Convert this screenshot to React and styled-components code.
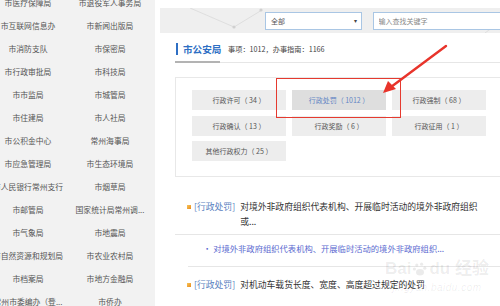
import React from 'react';
import styled, { createGlobalStyle } from 'styled-components';

const departments = [
    ['市医疗保障局', '市退役军人事务局'],
    ['市互联网信息办', '市新闻出版局'],
    ['市消防支队', '市保密局'],
    ['市行政审批局', '市科技局'],
    ['市市监局', '市城管局'],
    ['市住建局', '市人社局'],
    ['市公积金中心', '常州海事局'],
    ['市应急管理局', '市生态环境局'],
    ['市人民银行常州支行', '市烟草局'],
    ['市邮管局', '国家统计局常州调...'],
    ['市气象局', '市地震局'],
    ['市自然资源和规划局', '市农业农村局'],
    ['市档案局', '市地方金融局'],
    ['常州市委编办（登...', '市侨办'],
];

const powers = [
    { name: '行政许可', count: 34 },
    { name: '行政处罚', count: 1012, active: true },
    { name: '行政强制', count: 68 },
    { name: '行政确认', count: 13 },
    { name: '行政奖励', count: 6 },
    { name: '行政征用', count: 1 },
    { name: '其他行政权力', count: 25 },
];

const App = () => {
    return (
        <>
            <GlobalStyle />
            <Page>
                <Sidebar>
                    <DeptGrid>
                        {departments.flat().map((dept, index) => (
                            <Dept key={index}>{dept}</Dept>
                        ))}
                    </DeptGrid>
                </Sidebar>

                <Main>
                    <SearchBar>
                        <Network width="340" height="25">
                            <polyline points="30,0 74,19 102,2" fill="none" stroke="#d9d9d9" strokeWidth="0.8" />
                            <line x1="325" y1="25" x2="345" y2="10" stroke="#d9d9d9" strokeWidth="0.8" />
                            <circle cx="74" cy="19" r="1.6" fill="#d0d0d0" />
                            <circle cx="101" cy="2" r="1.6" fill="#d0d0d0" />
                        </Network>
                        <Select>
                            <span>全部</span>
                            <Caret>▾</Caret>
                        </Select>
                        <Search placeholder="输入查找关键字" />
                    </SearchBar>

                    <TitleRow>
                        <TitleTab>
                            <Title>市公安局</Title>
                        </TitleTab>
                        <Stats>事项：1012，办事指南：1166</Stats>
                    </TitleRow>

                    <Card>
                        {powers.map((power) => (
                            <PowerButton key={power.name} $active={power.active}>
                                {power.name}（ {power.count} ）
                            </PowerButton>
                        ))}
                    </Card>

                    <Item>
                        <Bullet />
                        <Tag>[行政处罚]</Tag>
                        <ItemText>对境外非政府组织代表机构、开展临时活动的境外非政府组织或...</ItemText>
                    </Item>
                    <SubItem>· 对境外非政府组织代表机构、开展临时活动的境外非政府组织...</SubItem>
                    <Item $last>
                        <Bullet />
                        <Tag>[行政处罚]</Tag>
                        <ItemText>对机动车载货长度、宽度、高度超过规定的处罚</ItemText>
                    </Item>
                </Main>

                <Highlight />
                <Arrow width="500" height="306">
                    <line x1="446" y1="46" x2="391" y2="87" stroke="#e8342b" strokeWidth="2.4" strokeLinecap="round" />
                    <polygon points="383,93 388,81 396,89" fill="#e8342b" />
                </Arrow>

                <Watermark>
                    <Brand>
                        Bai<Paw viewBox="0 0 20 20" width="16" height="16">
                            <circle cx="6" cy="5" r="2" />
                            <circle cx="12" cy="4" r="2" />
                            <circle cx="3" cy="10" r="2" />
                            <circle cx="16" cy="9" r="2" />
                            <ellipse cx="10" cy="14" rx="5" ry="4" />
                        </Paw>du 经验
                    </Brand>
                    <Domain>jingyan.baidu.com</Domain>
                </Watermark>
            </Page>
        </>
    );
};

export default App;

const GlobalStyle = createGlobalStyle`
    body {
        margin: 0;
        overflow: hidden;
        background: #fff;
        font-family: "Noto Sans CJK SC", "Noto Sans", sans-serif;
    }
`;

const Page = styled.div`
    position: relative;
    display: flex;
    width: 500px;
    height: 306px;
    overflow: hidden;
    background: #fff;
`;

const Sidebar = styled.div`
    flex: none;
    width: 168px;
    margin-left: -13px;
    background: #f2f2f2;
    overflow: hidden;
`;

const DeptGrid = styled.div`
    display: grid;
    grid-template-columns: 82px 82px;
    grid-auto-rows: 23px;
    margin-top: -9px;
`;

const Dept = styled.div`
    display: flex;
    align-items: center;
    justify-content: center;
    font-size: 7.8px;
    color: #555;
    white-space: nowrap;
`;

const Main = styled.div`
    flex: none;
    width: 345px;
    margin-left: 5px;
    padding-left: 15px;
    box-sizing: border-box;
`;

const SearchBar = styled.div`
    position: relative;
    display: flex;
    align-items: center;
    gap: 11px;
    height: 25px;
    margin: 8px 0 0 -15px;
    padding-left: 105px;
    background: #efefef;
    overflow: hidden;
`;

const Network = styled.svg`
    position: absolute;
    left: 0;
    top: 0;
`;

const Select = styled.div`
    position: relative;
    display: flex;
    align-items: center;
    justify-content: space-between;
    width: 102px;
    height: 18px;
    padding: 0 4px 0 5px;
    box-sizing: border-box;
    background: #fff;
    border: 1px solid #a9c6e4;
    font-size: 7px;
    color: #555;
`;

const Caret = styled.span`
    font-size: 6px;
    color: #444;
`;

const Search = styled.input`
    position: relative;
    width: 140px;
    height: 18px;
    padding: 0 5px;
    box-sizing: border-box;
    border: 1px solid #a9c6e4;
    outline: none;
    font-family: inherit;
    font-size: 7px;
    &::placeholder {
        color: #888;
    }
`;

const TitleRow = styled.div`
    display: flex;
    align-items: stretch;
    height: 25px;
    padding-top: 4px;
    border-bottom: 1px solid #e6e6e6;
`;

const TitleTab = styled.div`
    display: flex;
    align-items: center;
    width: 45px;
    margin-bottom: -1px;
    border-bottom: 2px solid #b3b3b3;
    box-sizing: border-box;
`;

const Title = styled.h2`
    margin: 0 0 0 1px;
    padding-left: 5px;
    border-left: 2px solid #2e6fc4;
    line-height: 12px;
    font-size: 9.6px;
    font-weight: 700;
    color: #2e6fc4;
    white-space: nowrap;
`;

const Stats = styled.span`
    display: flex;
    align-items: center;
    margin-left: 8px;
    padding-bottom: 2px;
    font-size: 7.2px;
    color: #444;
    white-space: nowrap;
`;

const Card = styled.div`
    display: grid;
    grid-template-columns: repeat(3, 94px);
    grid-auto-rows: 20px;
    column-gap: 6px;
    row-gap: 5.5px;
    width: 326px;
    margin-top: 14px;
    padding: 12px 16px 15px;
    box-sizing: border-box;
    border: 1px solid #e8e8e8;
`;

const PowerButton = styled.div`
    display: flex;
    align-items: center;
    justify-content: center;
    background: ${({ $active }) => ($active ? '#dedede' : '#ededed')};
    color: ${({ $active }) => ($active ? '#6486c4' : '#555')};
    font-size: 7px;
    white-space: pre;
`;

const Item = styled.div`
    display: flex;
    align-items: flex-start;
    padding: ${({ $last }) => ($last ? '10px' : '22px')} 0 5px 12px;
    border-bottom: ${({ $last }) => ($last ? 'none' : '1px solid #e6e6e6')};
    line-height: 15px;
    font-size: 8.8px;
`;

const Bullet = styled.span`
    flex: none;
    width: 4px;
    height: 4px;
    margin: 6px 3px 0 0;
    background: linear-gradient(135deg, #f7c65a, #e98a1c);
`;

const Tag = styled.span`
    flex: none;
    color: #5a7fc0;
    white-space: nowrap;
`;

const ItemText = styled.span`
    width: 242px;
    margin-left: 5px;
    color: #333;
`;

const SubItem = styled.div`
    margin-left: 13px;
    padding: 6px 0 10px 15px;
    border-bottom: 1px solid #e6e6e6;
    line-height: 15px;
    font-size: 8.3px;
    color: #5b6ad0;
    white-space: nowrap;
`;

const Highlight = styled.div`
    position: absolute;
    left: 276px;
    top: 78px;
    width: 125px;
    height: 40px;
    box-sizing: border-box;
    border: 1.5px solid #e53a2f;
    pointer-events: none;
`;

const Arrow = styled.svg`
    position: absolute;
    left: 0;
    top: 0;
    pointer-events: none;
`;

const Watermark = styled.div`
    position: absolute;
    left: 385px;
    top: 258px;
    display: flex;
    flex-direction: column;
    align-items: center;
    color: rgba(0, 0, 0, 0.08);
    pointer-events: none;
`;

const Brand = styled.div`
    display: flex;
    align-items: center;
    font-family: "Liberation Sans", "Noto Sans CJK SC", sans-serif;
    font-size: 17px;
    font-weight: 700;
    line-height: 22px;
    white-space: nowrap;
`;

const Paw = styled.svg`
    fill: rgba(0, 0, 0, 0.08);
    margin: 0 1px;
`;

const Domain = styled.div`
    margin-top: 2px;
    font-family: "Liberation Sans", sans-serif;
    font-size: 10px;
    font-style: italic;
    letter-spacing: 0.5px;
`;
